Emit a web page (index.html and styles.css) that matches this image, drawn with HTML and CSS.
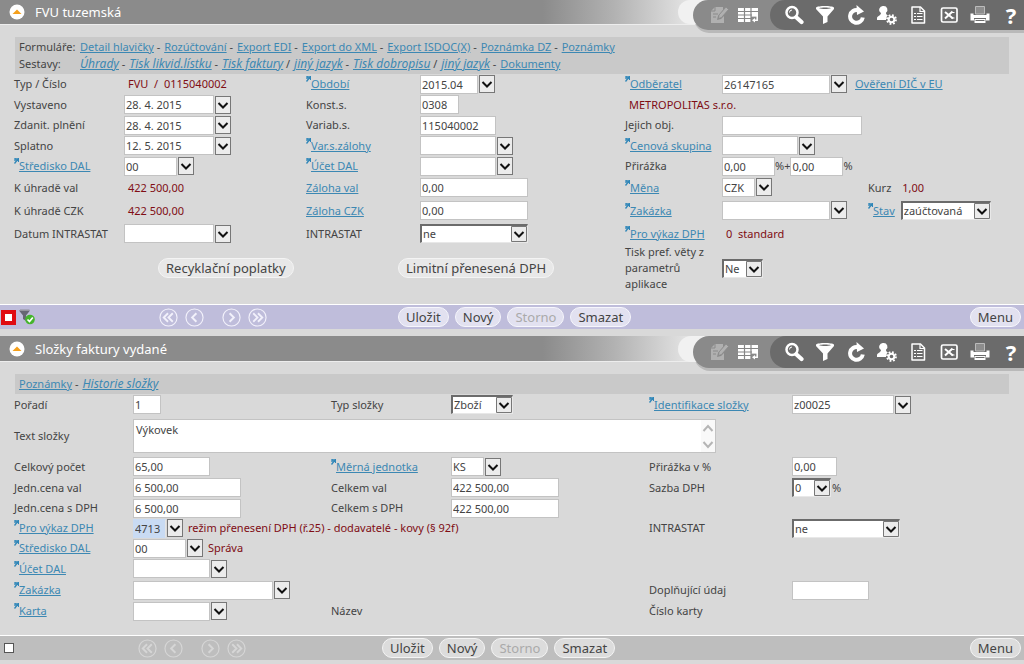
FILE: index.html
```html
<!DOCTYPE html>
<html lang="cs">
<head>
<meta charset="utf-8">
<title>FVU tuzemská</title>
<link rel="stylesheet" href="styles.css">
</head>
<body>
<svg class="sprite" aria-hidden="true">
  <symbol id="i-up" viewBox="0 0 16 16"><circle cx="8" cy="8" r="7.5" fill="#fff"/><path d="M3.5 10 8 5.5 12.5 10z" fill="#f5a01c"/></symbol>
  <symbol id="i-edit" viewBox="0 0 20 20"><path d="M6 2h8v3l-5 6-1 4 4-1 3-3v7H2V6z" fill="#b0b0b0"/><path d="M6 2v4H2M4 9h5M4 12h3" stroke="#8a8a8a" fill="none"/><path d="m17 2 2.500 2.500-7 8-3 1 .5-3.500z" fill="#b0b0b0" stroke="#8a8a8a" stroke-width=".8"/></symbol>
  <symbol id="i-table" viewBox="0 0 20 20"><path d="M0 3h20v8.500H0zM0 11h13v6H0z" fill="#fff"/><path d="M0 6.500h20M0 10h14M0 13.500h13M6.500 3v14M13 3v14" stroke="#858585" stroke-width="1.200"/><path d="M14 10.500h5.200v4.700h-3" stroke="#fff" stroke-width="1.500" fill="none"/><path d="m17 13-3 2.200 3 2.300z" fill="#fff"/></symbol>
  <symbol id="i-search" viewBox="0 0 20 20"><circle cx="8" cy="7.500" r="5.500" fill="none" stroke="#fff" stroke-width="2.500"/><path d="m12.500 12.500 5 4.500" stroke="#fff" stroke-width="4.200" stroke-linecap="round"/><path d="M5.500 7.500A2.500 2.500 0 0 1 8 5" stroke="#fff" fill="none"/></symbol>
  <symbol id="i-filter" viewBox="0 0 20 20"><path d="M1 2.500C3 .5 17 .5 19 2.500V4l-6.500 7.500V17L8 19v-7.500L1 4z" fill="#fff"/><path d="M4 3.200c3-.8 9-.8 12 0-3 1-9 1-12 0z" fill="#6b6b6b"/></symbol>
  <symbol id="i-reload" viewBox="0 0 20 20"><path d="M12 5.200A6.400 6.400 0 1 0 16.800 12.500" fill="none" stroke="#fff" stroke-width="4"/><path d="m10.500 0 7.500 6.500-7 3.500z" fill="#fff"/></symbol>
  <symbol id="i-user" viewBox="0 0 20 20"><path d="M6.500 1a3.800 3.800 0 0 1 2.500 6.800c0 1.800.5 2 2.500 3V15H0v-2c0-2 4-2.500 4-5A3.800 3.800 0 0 1 6.500 1z" fill="#fff"/><circle cx="14.500" cy="14.500" r="5.500" fill="#6b6b6b"/><circle cx="14.500" cy="14.500" r="2.800" fill="none" stroke="#fff" stroke-width="2"/><circle cx="14.500" cy="14.500" r="4.500" fill="none" stroke="#fff" stroke-width="1.800" stroke-dasharray="1.800 1.734"/></symbol>
  <symbol id="i-doc" viewBox="0 0 20 20"><path d="M4 2h8.500l4 4v12H4z" fill="none" stroke="#fff" stroke-width="1.500" stroke-linejoin="round"/><path d="M12 2v4.500h4.500M6 8.500h2m1 0h5.500M6 11.500h2m1 0h5.500M6 14.500h2m1 0h5.500" stroke="#fff" stroke-width="1.200" fill="none"/></symbol>
  <symbol id="i-excel" viewBox="0 0 20 20"><rect x="2.500" y="3" width="15.500" height="14" rx="1.500" fill="none" stroke="#fff" stroke-width="1.700"/><path d="m6 7 8 6.500M13.500 6.500 6 13.500" stroke="#fff" stroke-width="2"/><path d="M12 7.500h3.500M12 13h3.500" stroke="#fff"/></symbol>
  <symbol id="i-print" viewBox="0 0 20 20"><path d="M5.500 1.500h9V9h-9z" fill="#8d8d8d" stroke="#bbb"/><path d="M.5 8.500h3v1.500h13V8.500h3v7H16V13H4v2.500H.5z" fill="#fff"/><path d="M4.500 14h11v4h-11z" fill="#fff"/><path d="M5.500 15.500h9" stroke="#6b6b6b"/></symbol>
  <symbol id="i-applied" viewBox="0 0 18 18"><path d="M1 2.500h11L8 7.500V13l-3-2V7.500z" fill="#666773"/><path d="M2 2.200h9.500" stroke="#96969f" stroke-width="1.500"/><circle cx="12" cy="11.500" r="4.800" fill="#45b52d"/><path d="m9.500 11.500 2 2 3.300-4" fill="none" stroke="#fff" stroke-width="1.700"/></symbol>
  <symbol id="i-first" viewBox="0 0 20 20"><circle cx="10" cy="10" r="9" fill="none" stroke="currentColor" stroke-width="1.200"/><path d="M9.500 5.500 5 10l4.500 4.500M14.500 5.500 10 10l4.500 4.500" fill="none" stroke="currentColor" stroke-width="2"/></symbol>
  <symbol id="i-prev" viewBox="0 0 20 20"><circle cx="10" cy="10" r="9" fill="none" stroke="currentColor" stroke-width="1.200"/><path d="M12 5.500 7.500 10l4.500 4.500" fill="none" stroke="currentColor" stroke-width="2"/></symbol>
  <symbol id="i-next" viewBox="0 0 20 20"><circle cx="10" cy="10" r="9" fill="none" stroke="currentColor" stroke-width="1.200"/><path d="m8 5.500 4.500 4.500L8 14.500" fill="none" stroke="currentColor" stroke-width="2"/></symbol>
  <symbol id="i-last" viewBox="0 0 20 20"><circle cx="10" cy="10" r="9" fill="none" stroke="currentColor" stroke-width="1.200"/><path d="m5.500 5.500 4.500 4.500-4.500 4.500M10.500 5.500 15 10l-4.500 4.500" fill="none" stroke="currentColor" stroke-width="2"/></symbol>
</svg>

<section class="panel">
  <header class="bar bar-top">
    <button class="fold" aria-label="Sbalit"><svg><use href="#i-up"/></svg></button>
    <h1 class="title">FVU tuzemská</h1>
    <div class="tools">
      <div class="tools-light">
        <button class="tool" aria-label="Upravit"><svg><use href="#i-edit"/></svg></button>
        <button class="tool" aria-label="Tabulka"><svg><use href="#i-table"/></svg></button>
      </div>
      <div class="tools-dark">
        <button class="tool" aria-label="Hledat"><svg><use href="#i-search"/></svg></button>
        <button class="tool" aria-label="Filtr"><svg><use href="#i-filter"/></svg></button>
        <button class="tool" aria-label="Obnovit"><svg><use href="#i-reload"/></svg></button>
        <button class="tool" aria-label="Uživatel"><svg><use href="#i-user"/></svg></button>
        <button class="tool" aria-label="Dokument"><svg><use href="#i-doc"/></svg></button>
        <button class="tool" aria-label="Excel"><svg><use href="#i-excel"/></svg></button>
        <button class="tool" aria-label="Tisk"><svg><use href="#i-print"/></svg></button>
        <button class="tool help">?</button>
      </div>
    </div>
  </header>

  <nav class="links links-two">
    <span>Formuláře:</span>
    <div><a href="#">Detail hlavičky</a> - <a href="#">Rozúčtování</a> - <a href="#">Export EDI</a> - <a href="#">Export do XML</a> - <a href="#">Export ISDOC(X)</a> - <a href="#">Poznámka DZ</a> - <a href="#">Poznámky</a></div>
    <span>Sestavy:</span>
    <div><a class="it" href="#">Úhrady</a> - <a class="it" href="#">Tisk likvid.lístku</a> - <a class="it" href="#">Tisk faktury</a> / <a class="it" href="#">jiný jazyk</a> - <a class="it" href="#">Tisk dobropisu</a> / <a class="it" href="#">jiný jazyk</a> - <a href="#">Dokumenty</a></div>
  </nav>

  <form class="form form-head">
    <span class="label">Typ / Číslo</span>
    <div class="cell"><output class="out">FVU&nbsp; /&nbsp; 0115040002</output></div>
    <a class="label ref" id="l-obd" href="#"><span>Období</span></a>
    <div class="cell"><input class="w57" aria-labelledby="l-obd" value="2015.04"><button type="button" class="drop" aria-label="Výběr období"></button></div>
    <a class="label ref" id="l-odb" href="#"><span>Odběratel</span></a>
    <div class="cell"><input class="w108" aria-labelledby="l-odb" value="26147165"><button type="button" class="drop" aria-label="Výběr odběratele"></button><a class="check" href="#">Ověření DIČ v EU</a></div>

    <label class="label" for="vyst">Vystaveno</label>
    <div class="cell"><input class="w90" id="vyst" value="28. 4. 2015"><button type="button" class="drop" aria-label="Kalendář"></button></div>
    <label class="label" for="konst">Konst.s.</label>
    <div class="cell"><input class="w39" id="konst" value="0308"></div>
    <div class="cell wide2"><output class="out">METROPOLITAS s.r.o.</output></div>

    <label class="label" for="zdan">Zdanit. plnění</label>
    <div class="cell"><input class="w90" id="zdan" value="28. 4. 2015"><button type="button" class="drop" aria-label="Kalendář"></button></div>
    <label class="label" for="variab">Variab.s.</label>
    <div class="cell"><input class="w76" id="variab" value="115040002"></div>
    <label class="label" for="obj">Jejich obj.</label>
    <div class="cell"><input class="w140" id="obj"></div>

    <label class="label" for="splat">Splatno</label>
    <div class="cell"><input class="w90" id="splat" value="12. 5. 2015"><button type="button" class="drop" aria-label="Kalendář"></button></div>
    <a class="label ref" id="l-vsz" href="#"><span>Var.s.zálohy</span></a>
    <div class="cell"><input class="w76" aria-labelledby="l-vsz"><button type="button" class="drop" aria-label="Výběr zálohy"></button></div>
    <a class="label ref" id="l-cen" href="#"><span>Cenová skupina</span></a>
    <div class="cell"><input class="w76" aria-labelledby="l-cen"><button type="button" class="drop" aria-label="Výběr skupiny"></button></div>

    <a class="label ref" id="l-str" href="#"><span>Středisko DAL</span></a>
    <div class="cell"><input class="w52" aria-labelledby="l-str" value="00"><button type="button" class="drop" aria-label="Výběr střediska"></button></div>
    <a class="label ref" id="l-uce" href="#"><span>Účet DAL</span></a>
    <div class="cell"><input class="w76" aria-labelledby="l-uce"><button type="button" class="drop" aria-label="Výběr účtu"></button></div>
    <label class="label" for="prir">Přirážka</label>
    <div class="cell tight"><input class="w52" id="prir" value="0,00"><span>%+</span><input class="w52" aria-label="Přirážka 2" value="0,00"><span>%</span></div>

    <span class="label">K úhradě val</span>
    <div class="cell"><output class="out">422 500,00</output></div>
    <a class="label" id="l-zv" href="#"><span>Záloha val</span></a>
    <div class="cell"><input class="w108" aria-labelledby="l-zv" value="0,00"></div>
    <a class="label ref" id="l-men" href="#"><span>Měna</span></a>
    <div class="cell"><div class="slot"><input class="w33" aria-labelledby="l-men" value="CZK"><button type="button" class="drop" aria-label="Výběr měny"></button></div><span>Kurz</span><output class="out rate">1,00</output></div>

    <span class="label">K úhradě CZK</span>
    <div class="cell"><output class="out">422 500,00</output></div>
    <a class="label" id="l-zc" href="#"><span>Záloha CZK</span></a>
    <div class="cell"><input class="w108" aria-labelledby="l-zc" value="0,00"></div>
    <a class="label ref" id="l-zak" href="#"><span>Zakázka</span></a>
    <div class="cell"><div class="slot"><input class="w108" aria-labelledby="l-zak"><button type="button" class="drop" aria-label="Výběr zakázky"></button></div><a class="label ref state" id="l-stav" href="#"><span>Stav</span></a><select class="w90" aria-labelledby="l-stav"><option>zaúčtovaná</option></select></div>

    <label class="label" for="dint">Datum INTRASTAT</label>
    <div class="cell"><input class="w90" id="dint"><button type="button" class="drop" aria-label="Kalendář"></button></div>
    <label class="label" for="intr">INTRASTAT</label>
    <div class="cell"><select class="w108" id="intr"><option>ne</option></select></div>
    <a class="label ref" href="#"><span>Pro výkaz DPH</span></a>
    <div class="cell"><output class="out">0&nbsp; standard</output></div>

    <div class="cell wide2 recycle"><button type="button" class="pill">Recyklační poplatky</button></div>
    <div class="cell wide2 limit"><button type="button" class="pill">Limitní přenesená DPH</button></div>
    <label class="label wrap" for="pref">Tisk pref. věty z parametrů aplikace</label>
    <div class="cell"><select class="w41" id="pref"><option>Ne</option></select></div>
  </form>

  <footer class="foot foot-active">
    <div class="marks"><button class="stop" aria-label="Označeno"></button><svg class="applied"><use href="#i-applied"/></svg></div>
    <div class="pager">
      <button class="step" aria-label="První"><svg><use href="#i-first"/></svg></button>
      <button class="step" aria-label="Předchozí"><svg><use href="#i-prev"/></svg></button>
      <button class="step fwd" aria-label="Další"><svg><use href="#i-next"/></svg></button>
      <button class="step" aria-label="Poslední"><svg><use href="#i-last"/></svg></button>
    </div>
    <div class="actions">
      <button class="pill">Uložit</button>
      <button class="pill">Nový</button>
      <button class="pill" disabled>Storno</button>
      <button class="pill">Smazat</button>
    </div>
    <button class="pill menu">Menu</button>
  </footer>
</section>

<section class="panel">
  <header class="bar">
    <button class="fold" aria-label="Sbalit"><svg><use href="#i-up"/></svg></button>
    <h2 class="title">Složky faktury vydané</h2>
    <div class="tools">
      <div class="tools-light">
        <button class="tool" aria-label="Upravit"><svg><use href="#i-edit"/></svg></button>
        <button class="tool" aria-label="Tabulka"><svg><use href="#i-table"/></svg></button>
      </div>
      <div class="tools-dark">
        <button class="tool" aria-label="Hledat"><svg><use href="#i-search"/></svg></button>
        <button class="tool" aria-label="Filtr"><svg><use href="#i-filter"/></svg></button>
        <button class="tool" aria-label="Obnovit"><svg><use href="#i-reload"/></svg></button>
        <button class="tool" aria-label="Uživatel"><svg><use href="#i-user"/></svg></button>
        <button class="tool" aria-label="Dokument"><svg><use href="#i-doc"/></svg></button>
        <button class="tool" aria-label="Excel"><svg><use href="#i-excel"/></svg></button>
        <button class="tool" aria-label="Tisk"><svg><use href="#i-print"/></svg></button>
        <button class="tool help">?</button>
      </div>
    </div>
  </header>

  <nav class="links">
    <div><a href="#">Poznámky</a> - <a class="it" href="#">Historie složky</a></div>
  </nav>

  <form class="form form-items">
    <label class="label" for="por">Pořadí</label>
    <div class="cell"><input class="w28" id="por" value="1"></div>
    <label class="label" for="typ">Typ složky</label>
    <div class="cell"><select class="w62" id="typ"><option>Zboží</option></select></div>
    <a class="label ref" id="l-ide" href="#"><span>Identifikace složky</span></a>
    <div class="cell"><input class="w102" aria-labelledby="l-ide" value="z00025"><button type="button" class="drop" aria-label="Výběr složky"></button></div>

    <label class="label" for="txt">Text složky</label>
    <div class="cell wide5"><div class="memo"><textarea id="txt">Výkovek</textarea><span class="scroll" aria-hidden="true"></span></div></div>

    <label class="label" for="poc">Celkový počet</label>
    <div class="cell"><input class="w77" id="poc" value="65,00"></div>
    <a class="label ref" id="l-mer" href="#"><span>Měrná jednotka</span></a>
    <div class="cell"><input class="w33" aria-labelledby="l-mer" value="KS"><button type="button" class="drop" aria-label="Výběr jednotky"></button></div>
    <label class="label" for="prp">Přirážka v %</label>
    <div class="cell"><input class="w45" id="prp" value="0,00"></div>

    <label class="label" for="jcv">Jedn.cena val</label>
    <div class="cell"><input class="w108" id="jcv" value="6 500,00"></div>
    <label class="label" for="cv">Celkem val</label>
    <div class="cell"><input class="w108" id="cv" value="422 500,00"></div>
    <label class="label" for="saz">Sazba DPH</label>
    <div class="cell"><select class="w39" id="saz"><option>0</option></select><span>%</span></div>

    <label class="label" for="jcd">Jedn.cena s DPH</label>
    <div class="cell"><input class="w108" id="jcd" value="6 500,00"></div>
    <label class="label" for="cd">Celkem s DPH</label>
    <div class="cell wide3"><input class="w108" id="cd" value="422 500,00"></div>

    <a class="label ref" id="l-vyk" href="#"><span>Pro výkaz DPH</span></a>
    <div class="cell wide3"><input class="w33 picked" aria-labelledby="l-vyk" value="4713"><button type="button" class="drop" aria-label="Výběr řádku"></button><output class="out">režim přenesení DPH (ř.25) - dodavatelé - kovy (§ 92f)</output></div>
    <label class="label" for="intr2">INTRASTAT</label>
    <div class="cell"><select class="w108" id="intr2"><option>ne</option></select></div>

    <a class="label ref" id="l-str2" href="#"><span>Středisko DAL</span></a>
    <div class="cell wide5"><input class="w52" aria-labelledby="l-str2" value="00"><button type="button" class="drop" aria-label="Výběr střediska"></button><output class="out">Správa</output></div>

    <a class="label ref" id="l-uce2" href="#"><span>Účet DAL</span></a>
    <div class="cell wide5"><input class="w77" aria-labelledby="l-uce2"><button type="button" class="drop" aria-label="Výběr účtu"></button></div>

    <a class="label ref" id="l-zak2" href="#"><span>Zakázka</span></a>
    <div class="cell wide3"><input class="w140" aria-labelledby="l-zak2"><button type="button" class="drop" aria-label="Výběr zakázky"></button></div>
    <label class="label" for="dop">Doplňující údaj</label>
    <div class="cell"><input class="w77" id="dop"></div>

    <a class="label ref" id="l-kar" href="#"><span>Karta</span></a>
    <div class="cell"><input class="w77" aria-labelledby="l-kar"><button type="button" class="drop" aria-label="Výběr karty"></button></div>
    <span class="label wide2">Název</span>
    <span class="label wide2">Číslo karty</span>
  </form>

  <footer class="foot foot-idle">
    <div class="marks"><input type="checkbox" class="tick" aria-label="Označit"></div>
    <div class="pager">
      <button class="step" aria-label="První"><svg><use href="#i-first"/></svg></button>
      <button class="step" aria-label="Předchozí"><svg><use href="#i-prev"/></svg></button>
      <button class="step fwd" aria-label="Další"><svg><use href="#i-next"/></svg></button>
      <button class="step" aria-label="Poslední"><svg><use href="#i-last"/></svg></button>
    </div>
    <div class="actions">
      <button class="pill">Uložit</button>
      <button class="pill">Nový</button>
      <button class="pill" disabled>Storno</button>
      <button class="pill">Smazat</button>
    </div>
    <button class="pill menu">Menu</button>
  </footer>
</section>
</body>
</html>
```

FILE: styles.css
```css
* { box-sizing: border-box; }

body {
  margin: 0;
  background: #d9d9d9;
  color: #444;
  font: 11px/16px "Noto Sans", "Open Sans", sans-serif;
}

button, input, select, textarea {
  margin: 0;
  padding: 0;
  border: 0;
  border-radius: 0;
  color: inherit;
  font: inherit;
}

a { color: #3c88b3; }
.it { font-size: 12px; font-style: italic; }
.sprite { display: none; }

/* Title bar */
.bar {
  display: flex;
  align-items: flex-start;
  height: 26px;
  padding-left: 9px;
  border-bottom: 1px solid #ededed;
  background: linear-gradient(90deg, #8b8b8b 53%, #b2b2b2 60%, #e2e2e2 67%);
}
.bar-top { height: 25px; }
.fold { width: 16px; height: 100%; background: none; }
.fold svg { display: block; width: 16px; height: 16px; }
.title {
  margin: 0 0 0 10px;
  color: #fff;
  font-size: 13px;
  font-weight: 400;
  line-height: 26px;
}
.bar-top .title { line-height: 24px; }

.tools {
  display: flex;
  height: 32px;
  margin-left: auto;
  border-radius: 16px 0 0 16px;
  background: #8a8a8a;
  box-shadow: -18px -3px 0 -3px #f1f1f1, 1px 3px 0 #b9b9b9;
}
.bar-top .tools { height: 30px; }
.tools-light, .tools-dark { display: flex; align-items: center; }
.tools-light { gap: 9px; width: 77px; padding-left: 16px; }
.tools-dark {
  gap: 11px;
  padding: 0 3px 0 14px;
  border-radius: 16px 0 0 16px;
  background: #6b6b6b;
}
.tool { width: 20px; height: 20px; background: none; }
.tool svg { display: block; width: 20px; height: 20px; }
.help { color: #fff; font-size: 22px; font-weight: 700; line-height: 20px; }

/* Link strip */
.links {
  margin: 12px 15px 0;
  padding: 2px 4px;
  background: #c9c9c9;
}
.links a + a { margin-left: 1px; }
.links-two {
  display: grid;
  grid-template-columns: 61px 1fr;
  row-gap: 1px;
}

/* Forms */
.form {
  display: grid;
  padding-left: 14px;
  align-items: center;
}
.form-head {
  grid-template-columns: 110px 182fr 114px 205fr 97px 302fr;
  grid-template-rows: 20px 21px 20px 21px 20px 23px 23px 23px 46px;
  padding-bottom: 13px;
}
.form-items {
  grid-template-columns: 119px 198fr 120px 198fr 143px 232fr;
  grid-template-rows: 21px 41px 21px 21px 20px 20px 20px 21px 22px 20px;
  padding-bottom: 14px;
}
.label, .cell { min-width: 0; white-space: nowrap; }
.wide2 { grid-column: span 2; }
.wide3 { grid-column: span 3; }
.wide5 { grid-column: span 5; }
.wrap { white-space: normal; padding-right: 8px; }
.ref { display: flex; text-decoration: none; }
.ref span { text-decoration: underline; }
.ref::before {
  content: "";
  flex: none;
  width: 5px;
  height: 6px;
  background: url("data:image/svg+xml,%3Csvg xmlns='http://www.w3.org/2000/svg' viewBox='0 0 5 6'%3E%3Cpath d='M1 1h3.500M4.500 0v4M4 1 .5 5.500M1 0v3' fill='none' stroke='%232f86b8' stroke-width='1.300'/%3E%3C/svg%3E");
}
.cell { display: flex; align-items: center; gap: 1px; }
.tight { gap: 0; }
.slot { display: flex; gap: 1px; width: 145px; }
.out { margin-left: 4px; color: #800d14; }
.rate { margin-left: 10px; }
.check { margin-left: 7px; }
.state { margin-right: 5px; }
.recycle { padding-left: 144px; }
.limit { padding-left: 92px; }

input:not([type="checkbox"]) {
  height: 19px;
  padding: 0 1px;
  border: 1px solid #c3c3c3;
  background: #fff;
}
input.picked { background: #c9dbf3; border-color: #c9dbf3 #e4e4e4 #c9dbf3 #c9dbf3; }
.drop {
  width: 16px;
  height: 18px;
  border: 1px solid #777;
  background: #ececec url("data:image/svg+xml,%3Csvg xmlns='http://www.w3.org/2000/svg' viewBox='0 0 14 16'%3E%3Cpath d='m2.500 6 4.500 4.500L11.500 6' fill='none' stroke='%23111' stroke-width='2'/%3E%3C/svg%3E") center / 14px 16px no-repeat;
}
select {
  height: 19px;
  padding: 0 18px 0 1px;
  border: 1px solid #e8e8e8;
  border-top: 2px solid #6b6b6b;
  border-left: 2px solid #6b6b6b;
  appearance: none;
  background: #fff url("data:image/svg+xml,%3Csvg xmlns='http://www.w3.org/2000/svg' viewBox='0 0 16 16'%3E%3Cpath d='M.5.5h15v15H.5z' fill='%23ececec' stroke='%23777'/%3E%3Cpath d='m3.500 6 4.500 4.500L12.500 6' fill='none' stroke='%23111' stroke-width='2'/%3E%3C/svg%3E") right center / 16px 16px no-repeat;
}

.memo { position: relative; width: 583px; height: 34px; }
textarea {
  display: block;
  width: 100%;
  height: 100%;
  padding: 2px;
  border: 1px solid #c3c3c3;
  background: #fff;
  resize: none;
  overflow: hidden;
}
.scroll {
  position: absolute;
  top: 1px;
  right: 1px;
  bottom: 1px;
  width: 14px;
  background: #f9f9f9 url("data:image/svg+xml,%3Csvg xmlns='http://www.w3.org/2000/svg' viewBox='0 0 14 32'%3E%3Cpath d='m2.500 11 4.500-5 4.500 5M2.500 22l4.500 5 4.500-5' fill='none' stroke='%23b5b5b5' stroke-width='2'/%3E%3C/svg%3E") center / 14px 32px no-repeat;
}

.w28 { width: 28px; }
.w33 { width: 33px; }
.w39 { width: 39px; }
.w41 { width: 41px; }
.w45 { width: 45px; }
.w52 { width: 53px; }
.w57 { width: 58px; }
.w62 { width: 62px; }
.w76 { width: 76px; }
.w77 { width: 77px; }
.w90 { width: 90px; }
.w102 { width: 102px; }
.w108 { width: 108px; }
.w140 { width: 140px; }

/* Buttons */
.pill {
  height: 20px;
  padding: 0 7px;
  border: 1px solid #f4f4f4;
  border-radius: 10px;
  background: #e8e8e8;
  font-size: 13px;
  line-height: 17px;
  white-space: nowrap;
}
.pill:disabled { color: #aaa; }

/* Footer bar */
.foot {
  display: flex;
  align-items: center;
  height: 25px;
  padding-right: 3px;
  border-top: 1px solid #fff;
}
.foot-active { margin-bottom: 7px; background: #bfbddb; color: #444; }
.foot-idle { background: #bebebe; }
.foot-active .pill { background: #e2e1f0; border-color: #f6f6fc; }
.foot-idle .pill { background: #dcdcdc; }
.marks { display: flex; align-items: center; gap: 2px; width: 159px; padding-left: 1px; }
.foot-idle .marks { width: 138px; padding-left: 4px; }
.stop { width: 15px; height: 15px; border: 4px solid #e00b12; background: #fff; }
.applied { width: 18px; height: 18px; }
.tick { width: 10px; height: 10px; appearance: none; border: 1px solid #555; background: #fff; }
.pager { display: flex; gap: 7px; width: 239px; color: #f2f1fb; }
.foot-idle .pager { width: 244px; color: #d6d6d6; }
.step { width: 19px; height: 19px; background: none; }
.step svg { display: block; width: 19px; height: 19px; }
.fwd { margin-left: 11px; }
.actions { display: flex; gap: 6px; }
.menu { margin-left: auto; }
```
